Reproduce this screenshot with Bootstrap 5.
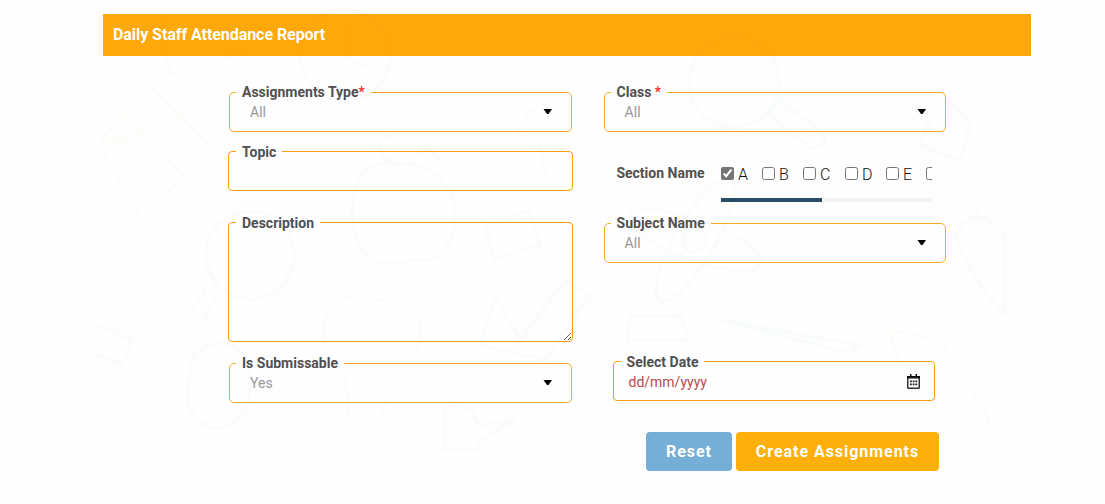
<!DOCTYPE html>
<html lang="en">
<head>
<meta charset="utf-8">
<meta name="viewport" content="width=device-width, initial-scale=1">
<title>Daily Staff Attendance Report</title>
<link href="https://cdn.jsdelivr.net/npm/bootstrap@5.3.0/dist/css/bootstrap.min.css" rel="stylesheet">
<style>
body{background:#fefefe;font-family:Roboto,"Liberation Sans",sans-serif;color:#212529;height:504px;overflow:hidden}
.report{width:928px;margin-left:103px;padding-top:14px}
.report-title{height:42px;background:#ffa80a;font-size:16px;font-weight:700;letter-spacing:-.06px;line-height:20px;padding:11px 10px;color:#fff;margin:0}
.form-area{margin-left:125px;margin-top:36px;gap:31px}
.left-col{width:345px}
.right-col{width:342px}
.field{position:relative;height:40px;border:1px solid #f5ac24;border-radius:5px}
.field.plain{border-color:#ff9f0e;border-radius:4px}
.field>label{position:absolute;left:6px;top:-11px;padding:0 6px;background:#fefefe;line-height:20px}
.field.plain>label{left:7px;top:-10px}
.right-col .field>label{margin-left:-.4px}
.caption{font-size:14px;font-weight:700;color:#505050;white-space:nowrap}
.caption i{color:#f22;font-style:normal;font-weight:500}
.value{font-size:14px;line-height:20px;color:#999;padding:9px 0 0 20px}
.right-col .value{padding-left:19.600px}
.arrow{position:absolute;right:19px;top:16px}
.field textarea{width:100%;height:118px;background:none;border:0;outline:0;resize:vertical;display:block}
.sections{width:211px;overflow:hidden;height:29px}
.sections .choice{font-size:16px;line-height:24px;font-weight:300;color:#111;display:flex;align-items:center;flex:none;padding-top:1px}
.sections input{width:13px;height:13px;margin:0 4px 3px 0;flex:none;accent-color:#757575}
.track{height:4px;background:#f3f3f3}
.thumb{width:101px;height:4px;background:#264e6b}
.action{height:39px;border:0;border-radius:4px;padding:0;font-size:16px;font-weight:700;letter-spacing:.96px;color:#fff}
.reset{width:86px;background:#75aed7}
.create{width:203px;background:#ffaf0a}
.doodles{position:absolute;left:0;top:0;pointer-events:none;opacity:.014}
</style>
</head>
<body>
<main class="report">
  <h1 class="report-title">Daily Staff Attendance Report</h1>
  <form class="form-area d-flex">
    <div class="left-col">
      <div class="field mx-auto" style="width:343px"><label class="caption">Assignments Type<i>*</i></label><div class="value">All</div>
        <svg class="arrow" width="9" height="6"><path d="M.5 0h8.500L5.500 5h-1.500z"/></svg></div>
      <div class="field plain" style="margin-top:19px"><label class="caption">Topic</label></div>
      <div class="field plain" style="margin-top:31px;height:120px"><label class="caption">Description</label><textarea aria-label="Description"></textarea></div>
      <div class="field mx-auto" style="width:343px;margin-top:21px"><label class="caption">Is Submissable</label><div class="value">Yes</div>
        <svg class="arrow" width="9" height="6"><path d="M.5 0h8.500L5.500 5h-1.500z"/></svg></div>
    </div>
    <div class="right-col">
      <div class="field"><label class="caption">Class <i>*</i></label><div class="value">All</div>
        <svg class="arrow" width="9" height="6"><path d="M.5 0h8.500L5.500 5h-1.500z"/></svg></div>
      <div class="d-flex" style="height:91px;padding:30px 0 0 12px">
        <span class="caption" style="width:105px;line-height:22px;padding-left:.4px">Section Name</span>
        <div>
          <div class="d-flex sections" style="height:36px;padding-bottom:12px">
            <label class="choice" style="width:41px"><input type="checkbox" checked>A</label>
            <label class="choice" style="width:41px"><input type="checkbox">B</label>
            <label class="choice" style="width:42px"><input type="checkbox">C</label>
            <label class="choice" style="width:41px"><input type="checkbox">D</label>
            <label class="choice" style="width:40px"><input type="checkbox">E</label>
            <label class="choice"><input type="checkbox"></label>
          </div>
          <div class="track"><div class="thumb"></div></div>
        </div>
      </div>
      <div class="field"><label class="caption">Subject Name</label><div class="value">All</div>
        <svg class="arrow" width="9" height="6"><path d="M.5 0h8.500L5.500 5h-1.500z"/></svg></div>
      <div class="field plain" style="width:322px;margin:98px 0 0 9px"><label class="caption">Select Date</label><div class="value" style="padding-left:14.500px;padding-top:10px;color:#b94b4b">dd/mm/yyyy</div>
        <svg style="position:absolute;right:14px;top:12px" width="13" height="15"><path fill="none" stroke="#333" stroke-width="1.500" d="M.75 3h11.500v10.500q0 .75-.75.75h-10q-.75 0-.75-.75z"/><path fill="#111" d="M0 2h13v2.500H0zM3 0h1.500v3H3zM8.500 0H10v3H8.500z"/><path fill="#222" d="M3 6.500h1.800v1.800H3zm2.700 0h1.800v1.800H5.700zm2.700 0h1.800v1.800H8.400zM3 9.500h1.800v1.800H3zm2.700 0h1.800v1.800H5.700zm2.700 0h1.800v1.800H8.400z"/></svg></div>
      <div class="d-flex" style="margin:31px 0 0 42px;gap:4px"><button type="button" class="btn action reset">Reset</button><button type="button" class="btn action create">Create Assignments</button></div>
    </div>
  </form>
</main>
<svg class="doodles" width="1105" height="504" fill="none" stroke-width="3" stroke-linejoin="round" stroke-linecap="round">
  <g stroke="#c90"><path d="M146 83l64 62-68 77-43-78zM121 110l63 66M99 144l82-27M118 135l8 8m0-8l-8 8M160 20l10 55 72-23M980 230c-15-30 20-50 40-20M530 110l22 12 20-20-5 30 20 15-28 2-14 24-5-28-24-10z"/><path d="M325 320c0-20 22-30 40-15 25-15 60 0 55 35-5 25-25 25-30 45l-10 35h-30l-5-40c-20-20-25-40-20-60zM890 330l50 10 50 80-20 20-70-70z"/></g>
  <g stroke="#d55"><circle cx="345" cy="55" r="45"/><path d="M345 25v30l25 15"/><circle cx="250" cy="255" r="44"/><path d="M205 290l-12 20m22-10l-12 20M485 225l45-15 10 35-45 15zM630 315h50l8 25h-60z"/><path d="M955 235q20-35 50 0v80q-30-30-50-80z"/></g>
  <g stroke="#2aa"><circle cx="734" cy="82" r="45"/><path d="M765 112l15-12 45 35q0 15-15 12zM930 120l20-20 20 25-10 35-40-15zM97 325l35 15-10 25-25-10M480 345l15-50 25 45 45-60 25 15-45 65zM720 320l140 25-10 8zM190 370c0-30 50-40 60 0 5 40-20 70-45 55s-15-35-15-55zM445 410q5-10 25 0l10 15 35-5-35 20-5 10h-30z"/></g>
  <g stroke="#883"><path d="M355 235c-10-50 10-80 40-70 25-10 60 15 60 50s-20 50-45 45c-25 10-50 0-55-25zM395 165q-30-20-5-30M410 165q15-25 30-5"/><ellipse cx="695" cy="240" rx="70" ry="20" transform="rotate(20 695 240)"/><ellipse cx="695" cy="240" rx="70" ry="20" transform="rotate(-60 695 240)"/><circle cx="695" cy="240" r="12"/></g>
</svg>
<script src="https://cdn.jsdelivr.net/npm/bootstrap@5.3.0/dist/js/bootstrap.bundle.min.js"></script>
</body>
</html>
